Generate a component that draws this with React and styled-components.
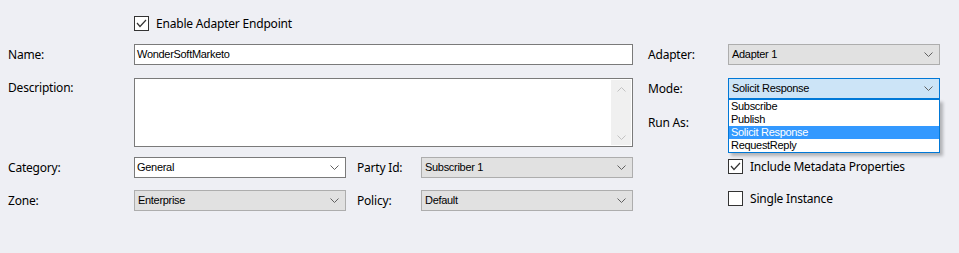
import React from 'react';
import styled, { createGlobalStyle } from 'styled-components';

const GlobalStyle = createGlobalStyle`
  html, body {
    margin: 0;
    padding: 0;
    background: #eeeff4;
  }
  body {
    font-family: "Noto Sans", "Open Sans", sans-serif;
    font-size: 12px;
    letter-spacing: -0.2px;
    color: #000;
  }
`;

const Page = styled.div`
  width: 959px;
  height: 253px;
  box-sizing: border-box;
  padding: 16px 19px 0 8px;
`;

const TopRow = styled.div`
  padding-left: 126px;
  height: 15px;
  margin-bottom: 13px;
  display: flex;
  align-items: center;
`;

const Form = styled.div`
  display: flex;
  gap: 15px;
`;

const Panel = styled.div`
  display: flex;
  flex-direction: column;
  width: ${(p) => p.$width}px;
`;

const Row = styled.div`
  display: flex;
  align-items: ${(p) => (p.$top ? 'flex-start' : 'center')};
  margin-top: ${(p) => p.$mt || 0}px;
  min-height: 21px;
`;

const Label = styled.div`
  width: ${(p) => p.$width}px;
  flex-shrink: 0;
  line-height: 16px;
  padding-top: ${(p) => (p.$top ? 2 : 0)}px;
  padding-left: ${(p) => p.$indent || 0}px;
  box-sizing: border-box;
  white-space: nowrap;
`;

const TextInput = styled.div`
  width: ${(p) => p.$width}px;
  height: 21px;
  box-sizing: border-box;
  border: 1px solid #7a7a7a;
  background: #fff;
  font-family: "Liberation Sans", Arial, sans-serif;
  font-size: 11px;
  letter-spacing: -0.3px;
  line-height: 19px;
  padding-left: 2px;
`;

const TextArea = styled.div`
  width: ${(p) => p.$width}px;
  height: 69px;
  box-sizing: border-box;
  border: 1px solid #7a7a7a;
  background: #fff;
  display: flex;
  justify-content: flex-end;
  padding: 1px;
`;

const ScrollBar = styled.div`
  width: 20px;
  background: #f0f0f0;
  display: flex;
  flex-direction: column;
  justify-content: space-between;
  align-items: center;
  padding: 7px 0 5px;
`;

const Combo = styled.div`
  position: relative;
  width: ${(p) => p.$width}px;
  height: 21px;
  box-sizing: border-box;
  border: 1px solid ${(p) => (p.$focus ? '#0078d7' : p.$editable ? '#7a7a7a' : '#adadad')};
  background: ${(p) => (p.$focus ? '#cce4f7' : p.$editable ? '#fff' : '#e1e1e1')};
  font-family: "Liberation Sans", Arial, sans-serif;
  font-size: 11px;
  letter-spacing: -0.3px;
  line-height: 19px;
  padding-left: ${(p) => (p.$editable ? 2 : 3)}px;
  display: flex;
  justify-content: space-between;
  align-items: center;
`;

const ComboText = styled.span`
  line-height: 19px;
`;

const Chevron = styled.svg`
  margin-right: 6px;
  flex-shrink: 0;
`;

const DropList = styled.ul`
  position: absolute;
  top: 20px;
  left: -1px;
  width: 212px;
  margin: 0;
  padding: 0;
  list-style: none;
  box-sizing: border-box;
  border: 1px solid #0078d7;
  background: #fff;
  box-shadow: 3px 3px 3px rgba(0, 0, 0, 0.25);
  z-index: 2;
`;

const DropItem = styled.li`
  height: 13px;
  line-height: 13px;
  padding-left: 2px;
  font-size: 11px;
  color: ${(p) => (p.$selected ? '#fff' : '#000')};
  background: ${(p) => (p.$selected ? '#3399ff' : 'transparent')};
`;

const CheckRow = styled.label`
  display: flex;
  align-items: center;
  gap: 7px;
  padding-left: ${(p) => p.$indent || 0}px;
  line-height: 16px;
  white-space: nowrap;
`;

const Box = styled.span`
  width: 15px;
  height: 15px;
  box-sizing: border-box;
  border: 1px solid #333;
  background: #fff;
  display: flex;
  align-items: center;
  justify-content: center;
  flex-shrink: 0;
`;

const Tick = () => (
  <svg width="11" height="9" viewBox="0 0 11 9">
    <polyline points="1,4 4,7.5 10,1" fill="none" stroke="#333" strokeWidth="1.2" />
  </svg>
);

const Checkbox = ({ checked, children, indent }) => (
  <CheckRow $indent={indent}>
    <Box>{checked && <Tick />}</Box>
    {children}
  </CheckRow>
);

const Down = ({ color = '#606060' }) => (
  <Chevron width="9" height="5" viewBox="0 0 9 5">
    <polyline points="0.5,0.5 4.5,4.5 8.5,0.5" fill="none" stroke={color} strokeWidth="1" />
  </Chevron>
);

const Up = ({ color = '#c2c2c2' }) => (
  <svg width="9" height="5" viewBox="0 0 9 5">
    <polyline points="0.5,4.5 4.5,0.5 8.5,4.5" fill="none" stroke={color} strokeWidth="1" />
  </svg>
);

const Select = ({ value, width, editable, focus, children }) => (
  <Combo $width={width} $editable={editable} $focus={focus}>
    <ComboText>{value}</ComboText>
    <Down />
    {children}
  </Combo>
);

const modes = ['Subscribe', 'Publish', 'Solicit Response', 'RequestReply'];

const App = () => {
  return (
    <>
      <GlobalStyle />
      <Page>
        <TopRow>
          <Checkbox checked>Enable Adapter Endpoint</Checkbox>
        </TopRow>
        <Form>
          <Panel $width={625}>
            <Row>
              <Label $width={126}>Name:</Label>
              <TextInput $width={499}>WonderSoftMarketo</TextInput>
            </Row>
            <Row $mt={13} $top>
              <Label $width={126} $top>Description:</Label>
              <TextArea $width={499}>
                <ScrollBar>
                  <Up />
                  <svg width="9" height="5" viewBox="0 0 9 5">
                    <polyline points="0.5,0.5 4.5,4.5 8.5,0.5" fill="none" stroke="#c2c2c2" strokeWidth="1" />
                  </svg>
                </ScrollBar>
              </TextArea>
            </Row>
            <Row $mt={10}>
              <Label $width={126}>Category:</Label>
              <Select value="General" width={212} editable />
              <Label $width={75} $indent={11}>Party Id:</Label>
              <Select value="Subscriber 1" width={212} />
            </Row>
            <Row $mt={12}>
              <Label $width={126}>Zone:</Label>
              <Select value="Enterprise" width={212} />
              <Label $width={75} $indent={11}>Policy:</Label>
              <Select value="Default" width={212} />
            </Row>
          </Panel>
          <Panel $width={292}>
            <Row>
              <Label $width={80}>Adapter:</Label>
              <Select value="Adapter 1" width={212} />
            </Row>
            <Row $mt={13}>
              <Label $width={80}>Mode:</Label>
              <Select value="Solicit Response" width={212} focus>
                <DropList>
                  {modes.map((m) => (
                    <DropItem key={m} $selected={m === 'Solicit Response'}>
                      {m}
                    </DropItem>
                  ))}
                </DropList>
              </Select>
            </Row>
            <Row $mt={13}>
              <Label $width={80}>Run As:</Label>
            </Row>
            <Row $mt={23}>
              <Checkbox checked indent={80}>Include Metadata Properties</Checkbox>
            </Row>
            <Row $mt={11}>
              <Checkbox indent={80}>Single Instance</Checkbox>
            </Row>
          </Panel>
        </Form>
      </Page>
    </>
  );
};

export default App;
